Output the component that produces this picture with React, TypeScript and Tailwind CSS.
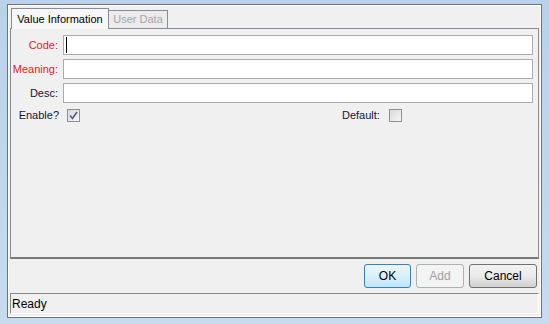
import React from "react";

const font = { fontFamily: "'Liberation Sans', Arial, sans-serif" };

function Field({ label, red, cursor }: { label: string; red?: boolean; cursor?: boolean }) {
  return (
    <div className="flex items-center h-[20px]">
      <div
        className={`w-[49px] text-right pr-[2px] text-[11px] ${red ? "text-[#e8191c]" : "text-[#14143a]"}`}
      >
        {label}
      </div>
      <div className="ml-[3px] flex-1 h-[20px] border border-[#ababab] bg-white flex items-center pl-[2px]">
        {cursor && <div className="w-px h-[16px] bg-black" />}
      </div>
    </div>
  );
}

function Check({ checked }: { checked?: boolean }) {
  return (
    <div className="w-[13px] h-[13px] border border-[#8f8f8f] bg-gradient-to-br from-[#d8d8d8] to-[#f7f7f7] flex items-center justify-center">
      {checked && (
        <svg width="9" height="9" viewBox="0 0 9 9">
          <path d="M1 4.5 L3.5 7.5 L8 1" fill="none" stroke="#4a5c94" strokeWidth="1.6" />
        </svg>
      )}
    </div>
  );
}

function Btn({ children, primary, disabled, w }: { children: React.ReactNode; primary?: boolean; disabled?: boolean; w: string }) {
  return (
    <div
      className={`${w} h-[24px] rounded-[3px] border flex items-center justify-center text-[12px] ${
        primary
          ? "border-[#3c7fb1] bg-gradient-to-b from-[#eaf6fd] via-[#d9f0fc] to-[#bee6fd]"
          : disabled
          ? "border-[#adb2b5] bg-[#f4f4f4] text-[#a0a0a0]"
          : "border-[#707070] bg-gradient-to-b from-[#f2f2f2] via-[#ebebeb] to-[#cfcfcf]"
      }`}
    >
      {children}
    </div>
  );
}

export default function App() {
  return (
    <div className="w-[549px] h-[324px] bg-gradient-to-b from-[#b9d1ea] to-[#c8dbef] px-[7px] pt-[4px] pb-[6px]" style={font}>
      <div className="w-full h-full border border-[#6e7378] bg-[#f0f0f0] flex flex-col">
        <div className="flex-1 border border-white flex flex-col px-[1px] pt-[1px]">
          {/* tabs */}
          <div className="flex items-end h-[21px] pl-[1px]">
            <div className="h-[21px] w-[98px] border border-b-0 border-[#898c95] bg-[#f7f7f7] text-[11px] text-black flex items-center justify-center relative top-px z-10">
              Value Information
            </div>
            <div className="h-[18px] w-[59px] border border-b-0 border-l-0 border-[#898c95] bg-[#ececec] text-[11px] text-[#a5a5a5] flex items-center justify-center">
              User Data
            </div>
          </div>
          <div className="h-[231px] border border-[#898c95] border-b-2 border-b-[#7a7a7a] bg-[#f0f0f0] pt-[6px] pr-[5px] flex flex-col gap-[4px]">
            <Field label="Code:" red cursor />
            <Field label="Meaning:" red />
            <Field label="Desc:" />
            <div className="flex items-center mt-[2px] h-[13px] text-[11px] text-[#14143a]">
              <div className="w-[48px] text-right">Enable?</div>
              <div className="ml-[8px]">
                <Check checked />
              </div>
              <div className="ml-[262px] w-[39px]">Default:</div>
              <div className="ml-[8px]">
                <Check />
              </div>
            </div>
          </div>
          <div className="flex justify-end gap-[5px] pt-[5px] pr-[2px] h-[34px]">
            <Btn primary w="w-[47px]">OK</Btn>
            <Btn disabled w="w-[48px]">Add</Btn>
            <Btn w="w-[68px]">Cancel</Btn>
          </div>
          <div className="h-[21px] border-t border-l border-[#8a8a8a] border-r border-r-white border-b border-b-white text-[12px] pl-[1px] flex items-center">
            Ready
          </div>
        </div>
      </div>
    </div>
  );
}
